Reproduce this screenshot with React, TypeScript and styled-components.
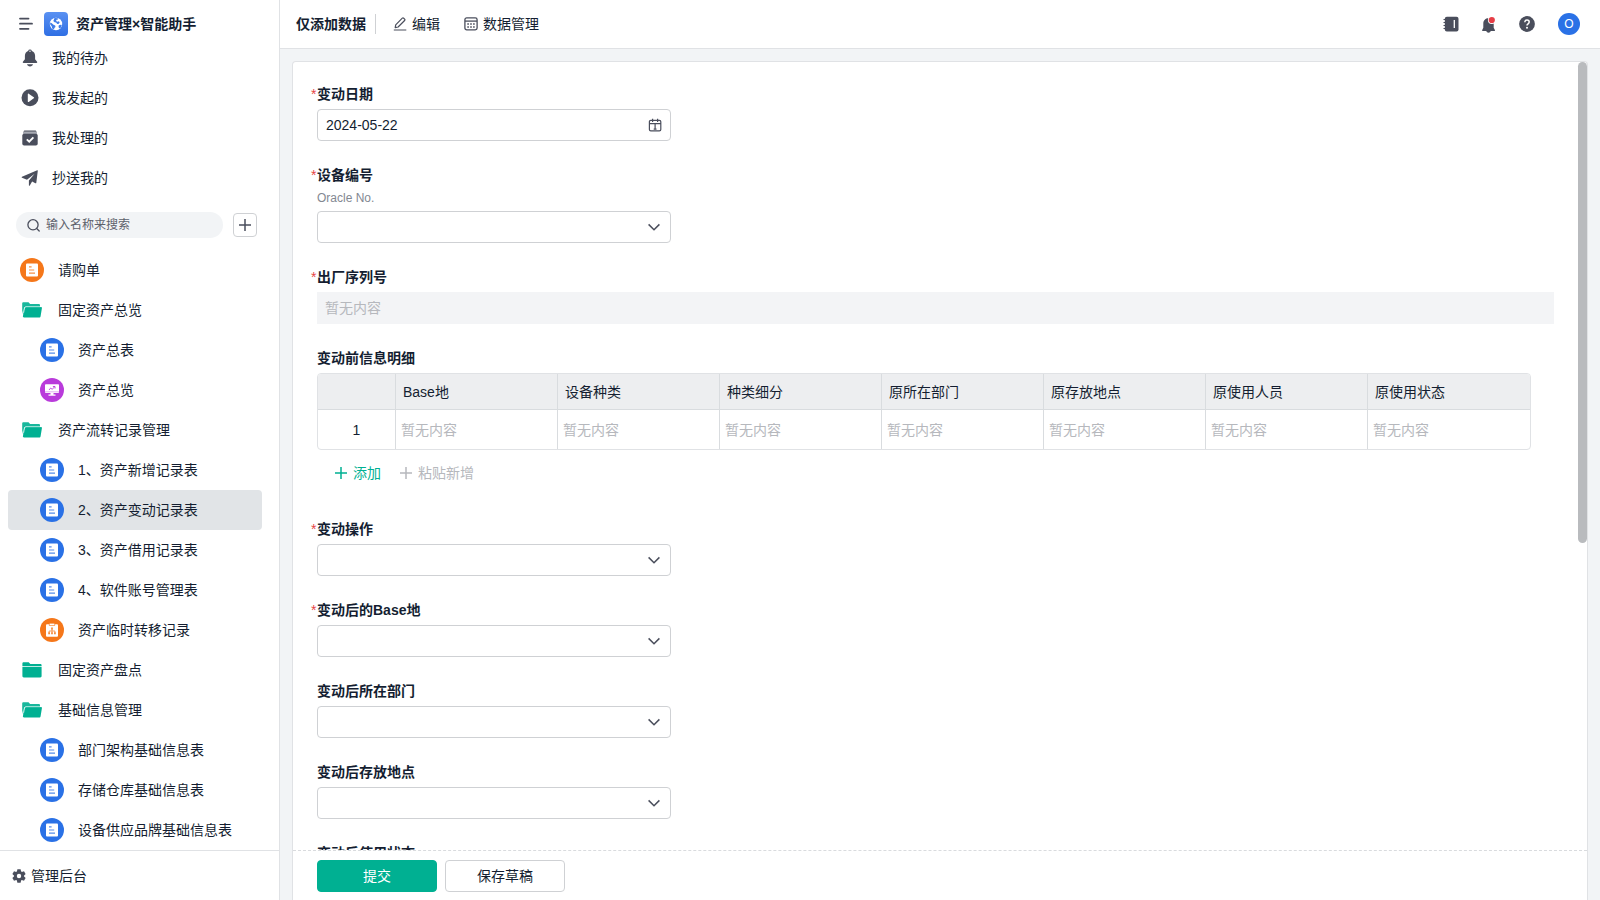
import React from "react";
import styled, { createGlobalStyle } from "styled-components";

const c = {
  text: "#141e31",
  icon: "#4a4e5c",
  muted: "#b6b8bd",
  line: "#e0e2e5",
  field: "#cfd1d4",
  page: "#f2f4f6",
  green: "#00b092",
  blue: "#2a71e6",
  orange: "#f5771a",
  purple: "#b93bdb",
};

const GlobalStyle = createGlobalStyle`
  *, *::before, *::after { box-sizing: border-box; }
  body {
    margin: 0;
    background: ${c.page};
    color: ${c.text};
    font: 14px/20px "Liberation Sans", "Noto Sans CJK SC", sans-serif;
  }
  button, input, select { font: inherit; color: inherit; }
  button { cursor: pointer; padding: 0; border: 0; background: none; }
  a { color: inherit; text-decoration: none; }
  svg { display: block; flex: none; }
`;

const Page = styled.div`
  display: grid;
  grid-template-columns: 280px minmax(0, 1fr);
  height: 100vh;
`;

/* Sidebar */

const Sidebar = styled.aside`
  display: flex;
  flex-direction: column;
  min-height: 0;
  background: #fff;
  border-right: 1px solid ${c.line};
`;

const Brand = styled.header`
  display: flex;
  align-items: flex-end;
  gap: 8px;
  flex: none;
  height: 38px;
  padding: 0 16px 2px 18px;
`;

const BrandButton = styled.button`
  display: grid;
  place-items: center start;
  height: 24px;
  width: 18px;
`;

const BrandLogo = styled.span`
  display: grid;
  place-items: center;
  width: 24px;
  height: 24px;
  border-radius: 4px;
  background: linear-gradient(180deg, #5a91f2, #2f6fe4);
`;

const BrandName = styled.h1`
  margin: 0;
  font-size: 14px;
  line-height: 24px;
  font-weight: 600;
`;

const SideScroll = styled.div`
  flex: 1;
  min-height: 0;
  overflow: hidden;
`;

const NavList = styled.ul`
  margin: 0;
  padding: 0 17px 0 8px;
  list-style: none;
`;

const ShortcutLink = styled.a`
  display: flex;
  align-items: center;
  gap: 13px;
  height: 40px;
  padding-left: 13px;
`;

const NavLink = styled.a<{ $nested?: boolean; $active?: boolean }>`
  display: flex;
  align-items: center;
  gap: 14px;
  height: 40px;
  padding-left: ${(p) => (p.$nested ? 32 : 12)}px;
  border-radius: 4px;
  background: ${(p) => (p.$active ? "#e1e4e7" : "transparent")};
`;

const IconDisc = styled.span<{ $color: string }>`
  display: grid;
  place-items: center;
  width: 24px;
  height: 24px;
  border-radius: 50%;
  background: ${(p) => p.$color};
`;

const SearchRow = styled.div`
  display: flex;
  align-items: center;
  gap: 10px;
  padding: 14px 22px 12px 16px;
`;

const SearchBox = styled.label`
  display: flex;
  flex: 1;
  align-items: center;
  gap: 6px;
  min-width: 0;
  height: 26px;
  padding: 0 11px;
  border-radius: 13px;
  background: #f2f4f6;
`;

const SearchInput = styled.input`
  flex: 1;
  min-width: 0;
  height: 26px;
  padding: 0;
  border: 0;
  outline: 0;
  background: none;
  font-size: 12px;
  &::placeholder { color: #5d616b; opacity: 1; }
`;

const AddButton = styled.button`
  display: grid;
  place-items: center;
  width: 24px;
  height: 24px;
  border: 1px solid ${c.field};
  border-radius: 4px;
  background: #fff;
`;

const SideFooter = styled.a`
  display: flex;
  align-items: center;
  gap: 5px;
  flex: none;
  height: 50px;
  padding-left: 12px;
  border-top: 1px solid ${c.line};
`;

/* Top bar */

const Main = styled.main`
  display: flex;
  flex-direction: column;
  min-width: 0;
  min-height: 0;
`;

const TopBar = styled.header`
  display: flex;
  align-items: center;
  flex: none;
  height: 49px;
  padding: 0 20px 0 16px;
  background: #fff;
  border-bottom: 1px solid ${c.line};
`;

const Mode = styled.strong`
  padding-right: 9px;
  font-weight: 600;
`;

const ToolLinks = styled.div`
  display: flex;
  align-items: center;
  gap: 24px;
  height: 20px;
  padding-left: 17px;
  border-left: 1px solid ${c.field};
`;

const ToolButton = styled.button`
  display: flex;
  align-items: center;
  gap: 5px;
`;

const TopActions = styled.div`
  display: flex;
  align-items: center;
  gap: 23px;
  margin-left: auto;
`;

const IconButtons = styled.div`
  display: flex;
  gap: 22px;
`;

const IconButton = styled.button`
  display: grid;
  place-items: center;
  width: 16px;
  height: 16px;
`;

const Avatar = styled.button`
  width: 22px;
  height: 22px;
  border-radius: 50%;
  background: ${c.blue};
  color: #fff;
  font-size: 12px;
  line-height: 22px;
`;

/* Form card */

const Card = styled.form`
  display: flex;
  flex-direction: column;
  flex: 1;
  min-height: 0;
  margin: 12px 12px 0;
  background: #fff;
  border: 1px solid ${c.line};
  border-bottom: 0;
  border-radius: 4px 4px 0 0;
`;

const CardBody = styled.div`
  display: flex;
  flex: 1;
  min-height: 0;
`;

const Fields = styled.div`
  display: flex;
  flex-direction: column;
  gap: 24px;
  flex: 1;
  min-width: 0;
  padding: 22px 24px 0;
  overflow: hidden;
`;

const ScrollTrack = styled.div`
  width: 9px;
`;

const ScrollThumb = styled.div`
  height: 61%;
  border-radius: 5px;
  background: #b9bbbe;
`;

const FieldBox = styled.div`
  display: flex;
  flex-direction: column;
  flex: none;
  gap: 4px;
`;

const Label = styled.label`
  font-weight: 600;
  line-height: 21px;
`;

const Star = styled.span`
  display: inline-block;
  width: 6px;
  margin-left: -6px;
  color: #e64545;
  font-weight: 400;
`;

const Hint = styled.small`
  color: #838892;
  font-size: 12px;
  line-height: 17px;
`;

const Control = styled.div`
  display: grid;
  align-items: center;
  width: 354px;
  max-width: 100%;
  height: 32px;
  border: 1px solid ${c.field};
  border-radius: 4px;
  & > * { grid-area: 1 / 1; }
  & > svg { justify-self: end; margin-right: 8px; pointer-events: none; }
`;

const TextInput = styled.input`
  width: 100%;
  height: 30px;
  padding: 0 8px;
  border: 0;
  outline: 0;
  background: none;
`;

const Select = styled.select`
  width: 100%;
  height: 30px;
  padding: 0 8px;
  border: 0;
  outline: 0;
  appearance: none;
  background: none;
`;

const ReadOnlyInput = styled.input`
  width: 100%;
  height: 32px;
  padding: 0 8px;
  border: 0;
  outline: 0;
  background: #f3f4f6;
  &::placeholder { color: ${c.muted}; opacity: 1; }
`;

const TableFrame = styled.div`
  margin-right: 23px;
  border: 1px solid ${c.line};
  border-radius: 4px;
  overflow: hidden;
`;

const Table = styled.table`
  width: 100%;
  table-layout: fixed;
  border-collapse: separate;
  border-spacing: 0;
`;

const HeadCell = styled.th<{ $index?: boolean }>`
  width: ${(p) => (p.$index ? "78px" : "auto")};
  height: 36px;
  padding: 0 7px;
  border-right: 1px solid #d9dcdf;
  border-bottom: 1px solid #d9dcdf;
  background: #edeef0;
  font-weight: 400;
  text-align: left;
  &:last-child { border-right: 0; }
`;

const Cell = styled.td<{ $index?: boolean }>`
  height: 39px;
  padding: 0 5px;
  border-right: 1px solid #d9dcdf;
  color: ${(p) => (p.$index ? c.text : c.muted)};
  text-align: ${(p) => (p.$index ? "center" : "left")};
  &:last-child { border-right: 0; }
`;

const RowActions = styled.div`
  display: flex;
  align-items: center;
  gap: 19px;
  height: 41px;
  padding: 0 18px 3px;
`;

const RowAction = styled.button<{ $muted?: boolean }>`
  display: flex;
  align-items: center;
  gap: 6px;
  color: ${(p) => (p.$muted ? c.muted : c.green)};
`;

const CardFooter = styled.footer`
  display: flex;
  gap: 8px;
  flex: none;
  padding: 9px 24px 8px;
  border-top: 1px dashed #d9dbde;
`;

const FormButton = styled.button<{ $primary?: boolean }>`
  width: 120px;
  height: 32px;
  border: 1px solid ${(p) => (p.$primary ? c.green : c.field)};
  border-radius: 4px;
  background: ${(p) => (p.$primary ? c.green : "#fff")};
  color: ${(p) => (p.$primary ? "#fff" : c.text)};
`;

/* Icons */

const MenuIcon = () => (
  <svg width="15" height="14" viewBox="0 0 15 14" stroke={c.icon} strokeWidth="1.8" strokeLinecap="round">
    <path d="M2 1.600H10.500M2 6.700h12M2 11.800H10.500" />
  </svg>
);

const GlobeIcon = () => (
  <svg width="14" height="14" viewBox="0 0 14 14">
    <circle cx="7" cy="7" r="6.2" fill="#fff" />
    <path
      d="M5.200 1.300 6.900.9l2.300.5-.3 1.200-1.400.2-.4 1.300 1.300.7 1.400-.5.9.9-.8 1.500-1.700.2-1.100-1.400-1.500-.2-1.300-1.200.6-1.300ZM1.200 5.400l1.600.8 1.700 1.500 1.700.7.3 1.500-1.200 1.200-.2 1.500-1.900-1.200-.5-2.200-1.600-1.900Z"
      fill="#3f7de9"
    />
    <path d="m9.800 8.200 2.100-.5.900.4-.9 2.100-1.500 1.200-.9-1.400Z" fill="#3f7de9" />
  </svg>
);

const BellIcon = () => (
  <svg width="18" height="18" viewBox="0 0 18 18" fill={c.icon}>
    <path d="M9 .5a2 2 0 0 1 1.900 1.400c2 .7 3.200 2.600 3.200 4.900v3.400l2 2.600c.4.600.1 1.200-.6 1.200H2.500c-.7 0-1-.6-.6-1.200l2-2.600V6.800c0-2.300 1.200-4.200 3.200-4.900A2 2 0 0 1 9 .5Z" />
    <path d="M6 15.200h6c-.4 1.400-1.500 2.200-3 2.200s-2.600-.8-3-2.200Z" />
    <circle cx="9" cy="2.200" r=".7" fill="#fff" />
  </svg>
);

const PlayIcon = () => (
  <svg width="18" height="18" viewBox="0 0 18 18">
    <circle cx="9" cy="8.800" r="8.500" fill={c.icon} />
    <path d="M6.800 5.200v7.200c0 .5.500.700.900.500l5.100-3.600a.6.6 0 0 0 0-1L7.700 4.700c-.4-.2-.9 0-.9.500Z" fill="#fff" />
  </svg>
);

const DoneIcon = () => (
  <svg width="18" height="18" viewBox="0 0 18 18">
    <path d="M4 1.500h10c.8 0 1.400.5 1.600 1.300H2.400C2.600 2 3.200 1.500 4 1.500Z" fill={c.icon} />
    <path d="M2 3.200h14v1.600H2Z" fill="#9295a0" />
    <rect x="1.300" y="4.800" width="15.400" height="11.700" rx="1.800" fill={c.icon} />
    <path d="m5.800 10.400 2.400 2.300 4.200-4.300" fill="none" stroke="#fff" strokeWidth="1.900" />
  </svg>
);

const PlaneIcon = () => (
  <svg width="18" height="18" viewBox="0 0 18 18" fill={c.icon}>
    <path d="M16.200 1.200c.3-.2.700.1.600.5l-1.500 12c0 .5-.5.700-.9.500l-3.300-1.600-2.300 3.800c-.3.500-.9.400-.9-.2v-4.700l5.700-6.700-7.600 6L1 8.700c-.4-.2-.5-.7 0-.9Z" />
  </svg>
);

const SearchIcon = () => (
  <svg width="13" height="13" viewBox="0 0 13 13" fill="none" stroke={c.icon} strokeWidth="1.300" strokeLinecap="round">
    <circle cx="6" cy="5.800" r="5.100" />
    <path d="m9.700 9.500 2.500 2.500" />
  </svg>
);

const PlusIcon = ({ color, weight = 1.5 }: { color: string; weight?: number }) => (
  <svg width="12" height="12" viewBox="0 0 12 12" stroke={color} strokeWidth={weight}>
    <path d="M6 0v12M0 6h12" />
  </svg>
);

const FormGlyph = ({ color }: { color: string }) => (
  <svg width="14" height="14" viewBox="0 0 14 14">
    <rect x="1" y=".4" width="12" height="13.200" rx="1" fill="#fff" />
    <path d="M4 3.900h2.600M4 7h5.200M4 10.100h6" stroke={color} strokeWidth="1.200" opacity=".8" />
  </svg>
);

const FlowGlyph = ({ color }: { color: string }) => (
  <svg width="14" height="14" viewBox="0 0 14 14">
    <rect x="1" y="1.200" width="12" height="12.600" rx="1" fill="#fff" />
    <rect x="4.200" y=".2" width="5.600" height="2.300" fill="#fff" stroke={color} strokeWidth=".6" />
    <path d="M6.100 4.500h1.800v2H6.100ZM3.200 9.300h1.800v1.900H3.200ZM6.100 9.300h1.800v1.900H6.100ZM9 9.300h1.800v1.900H9Z" fill={color} opacity=".85" />
    <path d="M7 6v3.500M4.100 9.500V8h5.800v1.500" fill="none" stroke={color} strokeWidth=".7" />
  </svg>
);

const ScreenGlyph = ({ color }: { color: string }) => (
  <svg width="14" height="14" viewBox="0 0 14 14">
    <rect y="1.200" width="14" height="8.900" rx=".8" fill="#fff" />
    <path d="M5.500 10h3v1.600h2v1.200h-7v-1.200h2Z" fill="#fff" />
    <path d="m4 7 1.700-2 1.400 1.300L9.600 3.900M7.900 3.500H10v2" fill="none" stroke={color} strokeWidth=".9" />
    <path d="M0 8.800h14" stroke={color} strokeWidth=".4" />
  </svg>
);

const FolderIcon = ({ open }: { open?: boolean }) => (
  <svg width="24" height="24" viewBox="0 0 24 24">
    {open ? (
      <>
        <path d="M2.200 5.500c0-.8.500-1.300 1.300-1.300h5l1.600 1.900h8.600c.8 0 1.300.5 1.300 1.300V9H5.700c-1 0-1.600.5-1.700 1.300L3.200 17l-1-4.500Z" fill="#18b79c" />
        <path d="M5.900 9.100h14.900c.8 0 1.200.5 1.100 1.200l-1.300 8c-.1.800-.6 1.200-1.400 1.200H4c-.8 0-1.200-.5-1.100-1.200l1.500-8c.1-.8.700-1.200 1.500-1.200Z" fill={c.green} />
        <path d="M3.600 14.800 4.500 10c.2-.9.700-1.300 1.500-1.300h14.600" fill="none" stroke="#fff" strokeWidth=".7" />
      </>
    ) : (
      <>
        <path d="M2.400 5.400c0-.8.500-1.200 1.300-1.200h5l1.600 1.700h9.900c.9 0 1.400.5 1.400 1.400v.9H2.400Z" fill={c.green} />
        <path d="M2.400 9h19.200v9.100c0 .9-.5 1.400-1.400 1.400H3.800c-.9 0-1.400-.5-1.400-1.400Z" fill={c.green} />
      </>
    )}
  </svg>
);

const GearIcon = () => (
  <svg width="14" height="14" viewBox="0 0 14 14">
    <g fill={c.icon}>
      {[0, 60, 120, 180, 240, 300].map((a) => (
        <path key={a} d="M5.400.3h3.200l.7 3H4.700Z" transform={`rotate(${a} 7 7)`} />
      ))}
      <circle cx="7" cy="7" r="4.900" />
    </g>
    <circle cx="7" cy="7" r="2.200" fill="#fff" />
  </svg>
);

const EditIcon = () => (
  <svg width="14" height="14" viewBox="0 0 14 14" fill="none" stroke={c.icon} strokeWidth="1.200" strokeLinejoin="round">
    <path d="m2.200 10.600.5-2.800L9.300 1.200a1 1 0 0 1 1.400 0l.9.900a1 1 0 0 1 0 1.400L5.100 10ZM.800 13h12.500" />
  </svg>
);

const GridIcon = () => (
  <svg width="14" height="14" viewBox="0 0 14 14" fill="none" stroke={c.icon} strokeWidth="1.300">
    <rect x=".9" y=".900" width="12.200" height="12" rx="1.800" />
    <path d="M1 4.100h12" />
    <path d="M3.300 7h1.600M6.200 7h1.600M9.100 7h1.600M3.300 10h1.600M6.200 10h1.600M9.100 10h1.600" strokeWidth="1.400" />
  </svg>
);

const CalendarIcon = () => (
  <svg width="14" height="14" viewBox="0 0 14 14" fill="none" stroke={c.icon} strokeWidth="1.200">
    <rect x="1.400" y="2.300" width="11.400" height="10.500" rx="1.400" />
    <path d="M1 5.700h12M4.600.8v3.200M9.600.8v3.200M7.100 6v5.300M5.700 11.100h2.800" strokeWidth="1.200" />
  </svg>
);

const ChevronIcon = () => (
  <svg width="14" height="14" viewBox="0 0 14 14" fill="none" stroke={c.icon} strokeWidth="1.500">
    <path d="m.6 4.400 5.400 5.300 5.400-5.300" />
  </svg>
);

const NotebookIcon = () => (
  <svg width="16" height="16" viewBox="0 0 16 16">
    <rect x="1.800" y=".8" width="13.700" height="14.600" rx="2" fill={c.icon} />
    <path d="M.5 3.500h3M.5 6.500h3M.5 9.500h3M.5 12.500h3" stroke={c.icon} strokeWidth="1.200" />
    <path d="M11.300 4v8" stroke="#fff" strokeWidth="1.300" />
  </svg>
);

const AlertIcon = () => (
  <svg width="16" height="18" viewBox="0 0 16 18">
    <path d="M7.500 2.200c3 0 5.200 2 5.200 5.200v4.400l1.200 2.200v1.100H9.800a2.400 2.400 0 0 1-4.600 0H1.200V14l1.100-2.200V7.400c0-3.200 2.200-5.200 5.200-5.200Z" fill={c.icon} />
    <circle cx="10.800" cy="4" r="3.900" fill="#fff" />
    <circle cx="10.800" cy="4" r="3.100" fill="#e63e46" />
  </svg>
);

const HelpIcon = () => (
  <svg width="16" height="16" viewBox="0 0 16 16">
    <circle cx="8" cy="8" r="7.900" fill={c.icon} />
    <path d="M5.800 6.300c0-1.400.9-2.200 2.200-2.200s2.200.8 2.200 2c0 1.700-2.200 1.700-2.200 3.400" fill="none" stroke="#fff" strokeWidth="1.500" />
    <circle cx="8" cy="11.700" r="1" fill="#fff" />
  </svg>
);

/* Data */

type Kind = "request" | "open" | "closed" | "form" | "screen" | "flow";

const shortcuts = [
  { text: "我的待办", icon: <BellIcon /> },
  { text: "我发起的", icon: <PlayIcon /> },
  { text: "我处理的", icon: <DoneIcon /> },
  { text: "抄送我的", icon: <PlaneIcon /> },
];

const entries: { text: string; kind: Kind; nested?: boolean; active?: boolean }[] = [
  { text: "请购单", kind: "request" },
  { text: "固定资产总览", kind: "open" },
  { text: "资产总表", kind: "form", nested: true },
  { text: "资产总览", kind: "screen", nested: true },
  { text: "资产流转记录管理", kind: "open" },
  { text: "1、资产新增记录表", kind: "form", nested: true },
  { text: "2、资产变动记录表", kind: "form", nested: true, active: true },
  { text: "3、资产借用记录表", kind: "form", nested: true },
  { text: "4、软件账号管理表", kind: "form", nested: true },
  { text: "资产临时转移记录", kind: "flow", nested: true },
  { text: "固定资产盘点", kind: "closed" },
  { text: "基础信息管理", kind: "open" },
  { text: "部门架构基础信息表", kind: "form", nested: true },
  { text: "存储仓库基础信息表", kind: "form", nested: true },
  { text: "设备供应品牌基础信息表", kind: "form", nested: true },
];

const columns = ["Base地", "设备种类", "种类细分", "原所在部门", "原存放地点", "原使用人员", "原使用状态"];

const EntryIcon = ({ kind }: { kind: Kind }) => {
  switch (kind) {
    case "open":
      return <FolderIcon open />;
    case "closed":
      return <FolderIcon />;
    case "request":
      return <IconDisc $color={c.orange}><FormGlyph color={c.orange} /></IconDisc>;
    case "flow":
      return <IconDisc $color={c.orange}><FlowGlyph color={c.orange} /></IconDisc>;
    case "screen":
      return <IconDisc $color={c.purple}><ScreenGlyph color={c.purple} /></IconDisc>;
    default:
      return <IconDisc $color={c.blue}><FormGlyph color={c.blue} /></IconDisc>;
  }
};

type SelectFieldProps = { id: string; label: string; required?: boolean; hint?: string };

const SelectField = ({ id, label, required, hint }: SelectFieldProps) => (
  <FieldBox>
    <Label htmlFor={id}>
      {required && <Star>*</Star>}
      {label}
    </Label>
    {hint && <Hint>{hint}</Hint>}
    <Control>
      <Select id={id} defaultValue="">
        <option value="" />
      </Select>
      <ChevronIcon />
    </Control>
  </FieldBox>
);

export default function App() {
  return (
    <>
      <GlobalStyle />
      <Page>
        <Sidebar>
          <Brand>
            <BrandButton type="button" aria-label="菜单"><MenuIcon /></BrandButton>
            <BrandLogo><GlobeIcon /></BrandLogo>
            <BrandName>资产管理×智能助手</BrandName>
          </Brand>
          <SideScroll>
            <NavList>
              {shortcuts.map((s) => (
                <li key={s.text}>
                  <ShortcutLink href="#">{s.icon}{s.text}</ShortcutLink>
                </li>
              ))}
            </NavList>
            <SearchRow>
              <SearchBox>
                <SearchIcon />
                <SearchInput type="text" placeholder="输入名称来搜索" aria-label="输入名称来搜索" />
              </SearchBox>
              <AddButton type="button" aria-label="新建"><PlusIcon color={c.icon} /></AddButton>
            </SearchRow>
            <NavList>
              {entries.map((e) => (
                <li key={e.text}>
                  <NavLink href="#" $nested={e.nested} $active={e.active}>
                    <EntryIcon kind={e.kind} />
                    {e.text}
                  </NavLink>
                </li>
              ))}
            </NavList>
          </SideScroll>
          <SideFooter href="#"><GearIcon />管理后台</SideFooter>
        </Sidebar>

        <Main>
          <TopBar>
            <Mode>仅添加数据</Mode>
            <ToolLinks>
              <ToolButton type="button"><EditIcon />编辑</ToolButton>
              <ToolButton type="button"><GridIcon />数据管理</ToolButton>
            </ToolLinks>
            <TopActions>
              <IconButtons>
                <IconButton type="button" aria-label="通讯录"><NotebookIcon /></IconButton>
                <IconButton type="button" aria-label="通知"><AlertIcon /></IconButton>
                <IconButton type="button" aria-label="帮助"><HelpIcon /></IconButton>
              </IconButtons>
              <Avatar type="button">O</Avatar>
            </TopActions>
          </TopBar>

          <Card>
            <CardBody>
              <Fields>
                <FieldBox>
                  <Label htmlFor="date"><Star>*</Star>变动日期</Label>
                  <Control>
                    <TextInput id="date" type="text" defaultValue="2024-05-22" />
                    <CalendarIcon />
                  </Control>
                </FieldBox>
                <SelectField id="device" label="设备编号" required hint="Oracle No." />
                <FieldBox>
                  <Label htmlFor="serial"><Star>*</Star>出厂序列号</Label>
                  <ReadOnlyInput id="serial" type="text" placeholder="暂无内容" readOnly />
                </FieldBox>
                <FieldBox>
                  <Label as="div" id="detail">变动前信息明细</Label>
                  <TableFrame>
                    <Table aria-labelledby="detail">
                      <thead>
                        <tr>
                          <HeadCell $index />
                          {columns.map((name) => <HeadCell key={name}>{name}</HeadCell>)}
                        </tr>
                      </thead>
                      <tbody>
                        <tr>
                          <Cell $index>1</Cell>
                          {columns.map((name) => <Cell key={name}>暂无内容</Cell>)}
                        </tr>
                      </tbody>
                    </Table>
                  </TableFrame>
                  <RowActions>
                    <RowAction type="button"><PlusIcon color={c.green} />添加</RowAction>
                    <RowAction type="button" $muted><PlusIcon color={c.muted} />粘贴新增</RowAction>
                  </RowActions>
                </FieldBox>
                <SelectField id="action" label="变动操作" required />
                <SelectField id="base" label="变动后的Base地" required />
                <SelectField id="dept" label="变动后所在部门" />
                <SelectField id="place" label="变动后存放地点" />
                <SelectField id="status" label="变动后使用状态" />
              </Fields>
              <ScrollTrack><ScrollThumb /></ScrollTrack>
            </CardBody>
            <CardFooter>
              <FormButton type="button" $primary>提交</FormButton>
              <FormButton type="button">保存草稿</FormButton>
            </CardFooter>
          </Card>
        </Main>
      </Page>
    </>
  );
}
